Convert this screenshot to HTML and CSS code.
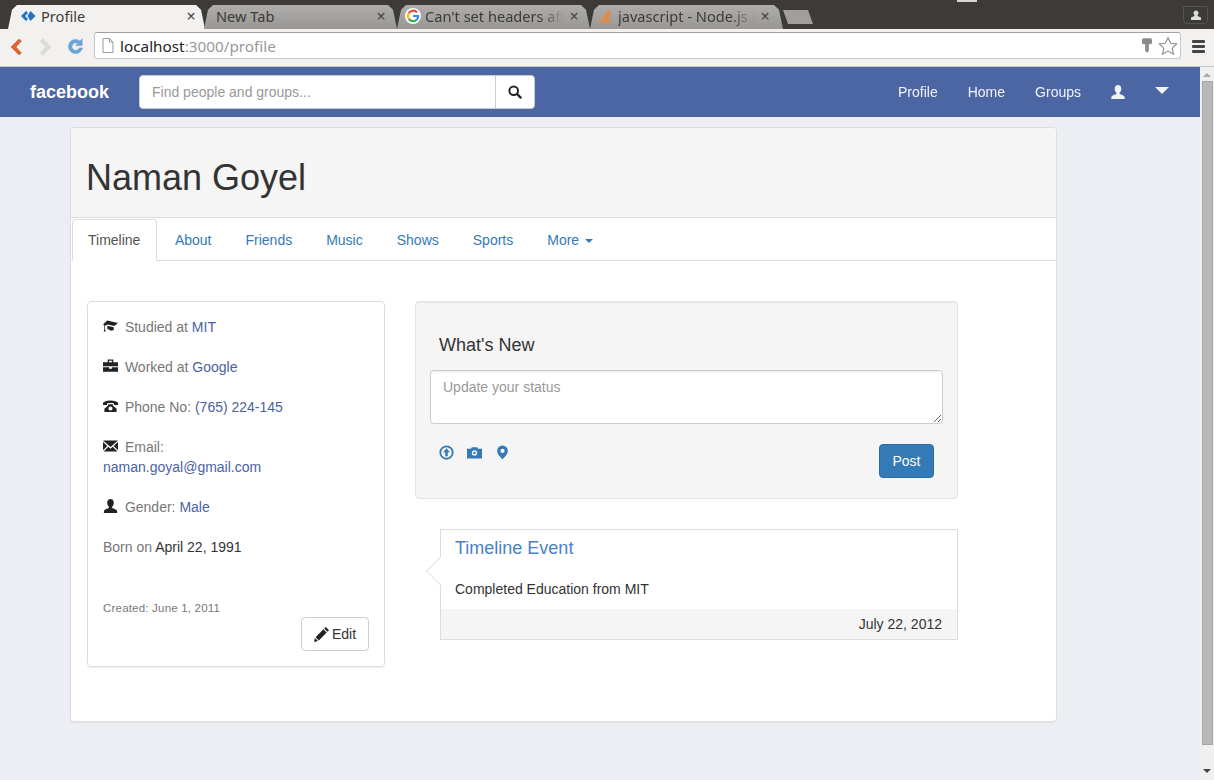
FILE: index.html
```html
<!DOCTYPE html>
<html lang="en">
<head>
  <meta charset="UTF-8">
  <title>Profile</title>
  <link rel="stylesheet" href="styles.css">
</head>
<body>
  <div class="windowGlint"></div>
  <div class="tabStrip">
    <div class="tab tabActive">
      <svg class="favicon" viewBox="0 0 16 16"><path fill="#1a73c8" d="M5 3 0 8l5 5 2-2-3-3 3-3zM9.500 3l-3 5 3 5 5-5z"/></svg>
      <span class="tabTitle">Profile</span>
      <span class="tabClose">×</span>
    </div>
    <div class="tab">
      <span class="tabTitle tabPlain">New Tab</span>
      <span class="tabClose">×</span>
    </div>
    <div class="tab">
      <svg class="favicon" viewBox="0 0 16 16">
        <circle cx="8" cy="8" r="8" fill="#fff"/>
        <path fill="none" stroke="#ea4335" stroke-width="2.200" d="M12 4.300A5.200 5.200 0 0 0 3.800 5.200"/>
        <path fill="none" stroke="#fbbc05" stroke-width="2.200" d="M3.800 5.200a5.200 5.200 0 0 0 0 5.600"/>
        <path fill="none" stroke="#34a853" stroke-width="2.200" d="M3.800 10.800a5.200 5.200 0 0 0 8 1"/>
        <path fill="none" stroke="#4285f4" stroke-width="2.200" d="M11.800 11.800A5.200 5.200 0 0 0 13.200 8H8"/>
      </svg>
      <span class="tabTitle">Can't set headers aft</span>
      <span class="tabClose">×</span>
    </div>
    <div class="tab tabLast">
      <svg class="favicon" viewBox="0 0 16 16"><path fill="none" stroke="#e8883a" stroke-width="1.500" d="M3 9.500v4.500h9V9.500M5 12.200h5M5.200 10l5 .5M5.800 7.800l4.800 1.400M6.800 5.500l4.300 2.500M8.500 3.500l3.500 3.500M10.800 2l2 4"/></svg>
      <span class="tabTitle">javascript - Node.js E</span>
      <span class="tabClose">×</span>
    </div>
    <div class="newTab"></div>
    <div class="profileBadge">
      <svg viewBox="0 0 12 12"><path fill="#ddd" d="M6 1.500a2.500 2.500 0 0 1 1.600 4.400V7L11 8.500V11H1V8.500L4.400 7V5.900A2.500 2.500 0 0 1 6 1.500z"/></svg>
    </div>
  </div>

  <div class="toolbar">
    <svg class="toolIcon" viewBox="0 0 16 20"><path fill="#e0672a" stroke="#b85a2e" stroke-width=".5" d="M11 2 3 10l8 8 2.500-2L8 10l5.500-6z"/></svg>
    <svg class="toolIcon" viewBox="0 0 16 20"><path fill="#dcdcda" stroke="#c8c8c6" stroke-width=".5" d="m5 2 8 8-8 8-2.500-2L8 10 2.500 4z"/></svg>
    <svg class="toolIcon reload" viewBox="0 0 18 18"><path fill="#6ea5d8" stroke="#5b93c9" stroke-width=".5" d="M9 1.500a7.500 7.500 0 0 1 4.600 1.600L16 1v7h-7l2.300-2.300A4 4 0 1 0 13 10.500h3.400A7.500 7.500 0 1 1 9 1.500z"/></svg>
    <div class="urlBox">
      <svg class="pageIcon" viewBox="0 0 12 15"><path fill="#fff" stroke="#9a9a9a" d="M1 .5h6.500L11 4v10.500H1z"/><path fill="none" stroke="#9a9a9a" d="M7.500.5V4H11"/></svg>
      <span class="urlHost">localhost</span><span class="urlRest">:3000/profile</span>
      <svg class="keyIcon" viewBox="0 0 11 16"><path fill="#8a8a8a" d="M2 0h7q2 0 2 2v3q0 1.500-2 1.500H7.500V14L5.500 16 3.500 14V6.500H2q-2 0-2-1.500V2q0-2 2-2z"/></svg>
      <svg class="starIcon" viewBox="0 0 20 20"><path fill="#fff" stroke="#8c8c8c" stroke-width="1.100" d="m10 1.500 2.600 5.700 6.200.7-4.600 4.200 1.300 6.100-5.500-3.100-5.500 3.100 1.300-6.100-4.600-4.200 6.200-.7z"/></svg>
    </div>
    <div class="menuBtn"><span></span><span></span><span></span></div>
  </div>

  <div class="viewport">
    <div class="page">
      <div class="topNav">
        <a class="brand" href="#">facebook</a>
        <form class="searchForm">
          <input class="searchInput" type="text" placeholder="Find people and groups...">
          <button class="searchBtn" type="button">
            <svg viewBox="0 0 14 14"><circle cx="5.700" cy="5.700" r="4.300" fill="none" stroke="#222" stroke-width="2"/><path stroke="#222" stroke-width="2.400" d="m9 9 4.200 4.200"/></svg>
          </button>
        </form>
        <ul class="navLinks">
          <li><a href="#">Profile</a></li>
          <li><a href="#">Home</a></li>
          <li><a href="#">Groups</a></li>
          <li><a href="#"><svg class="navUser" viewBox="0 0 14 14"><use href="#iconUser"/></svg></a></li>
          <li><a href="#"><span class="navCaret"></span></a></li>
        </ul>
      </div>

      <div class="main">
        <div class="card">
          <div class="cardHead">
            <h1>Naman Goyel</h1>
          </div>
          <ul class="profileTabs">
            <li class="current"><a href="#">Timeline</a></li>
            <li><a href="#">About</a></li>
            <li><a href="#">Friends</a></li>
            <li><a href="#">Music</a></li>
            <li><a href="#">Shows</a></li>
            <li><a href="#">Sports</a></li>
            <li><a href="#">More <span class="tabCaret"></span></a></li>
          </ul>

          <div class="cardBody">
            <div class="infoPanel">
              <p class="infoRow">
                <svg class="glyph" viewBox="0 0 16 14"><path fill="#222" d="M4.500 1 16 3.800 12 7 5 5.300 2.200 6.700v4.100l.8 2H.7l.7-2V6.300L0 5.500zM4.600 6.700l6.900 1.700v2.800L8.500 12l-3.900-2z"/></svg>
                Studied at <a href="#">MIT</a>
              </p>
              <p class="infoRow">
                <svg class="glyph" viewBox="0 0 16 14"><path fill="#222" d="M5 0h6v3h5v4.300H0V3h5zM6.300 1.300V3h3.400V1.300zM0 8.300h6.500v1.500h3V8.300H16V13H0z"/></svg>
                Worked at <a href="#">Google</a>
              </p>
              <p class="infoRow">
                <svg class="glyph" viewBox="0 0 16 14"><path fill="#222" d="M8 1c4 0 7 1 8 2.500V6h-4.300V4.200C10 3.700 6 3.700 4.300 4.200V6H0V3.500C1 2 4 1 8 1zM5.500 5h5v1.500L14.500 10v3.500h-13V10l4-3.500zM8 7.500a2.200 2.200 0 1 0 0 4.400 2.200 2.200 0 0 0 0-4.400z"/></svg>
                Phone No: <a href="#">(765) 224-145</a>
              </p>
              <p class="infoRow">
                <svg class="glyph" viewBox="0 0 16 14"><path fill="#222" d="M0 1h16L8 8zM0 2.700 4.700 7 0 11.500zM16 2.700 11.300 7l4.700 4.500zM5.600 7.800 8 10l2.400-2.200 5 5H.6z"/></svg>
                Email: <br><a href="#">naman.goyal@gmail.com</a>
              </p>
              <p class="infoRow">
                <svg class="glyph" viewBox="0 0 14 14"><use href="#iconUser"/></svg>
                Gender: <a href="#">Male</a>
              </p>
              <p class="infoRow">Born on <span class="infoDark">April 22, 1991</span></p>
              <p class="createdLine">Created: June 1, 2011</p>
              <div class="editLine">
                <button class="editBtn" type="button">
                  <svg viewBox="0 0 14 14"><path fill="#222" d="M11 0l3 3-1.500 1.500-3-3zM8.800 2.200l3 3L4.500 12.500l-3-3zM.9 10.300l2.800 2.800L0 14z"/></svg>
                  Edit
                </button>
              </div>
            </div>

            <div class="feedCol">
              <div class="statusBox">
                <h4>What's New</h4>
                <textarea class="statusInput" placeholder="Update your status"></textarea>
                <div class="statusFoot">
                  <div class="statusIcons">
                    <svg viewBox="0 0 14 14"><circle cx="7" cy="7" r="5.800" fill="none" stroke="#337ab7" stroke-width="1.700"/><path fill="#337ab7" d="M7 3 10.200 6.800H8.200V10.500H5.800V6.800H3.800z"/></svg>
                    <svg viewBox="0 0 14 14"><path fill="#337ab7" fill-rule="evenodd" d="M4.500 2h5l.8 1.500H14V12.500H0V3.500h3.700zM7 5a2.500 2.500 0 1 0 0 5 2.500 2.500 0 0 0 0-5zm0 1.400a1.100 1.100 0 1 1 0 2.200 1.100 1.100 0 0 1 0-2.200z"/></svg>
                    <svg viewBox="0 0 14 14"><path fill="#337ab7" fill-rule="evenodd" d="M7 .5a5 5 0 0 1 5 5c0 3-3 5.500-5 8-2-2.500-5-5-5-8a5 5 0 0 1 5-5zm0 3a2 2 0 1 0 0 4 2 2 0 0 0 0-4z"/></svg>
                  </div>
                  <button class="postBtn" type="button">Post</button>
                </div>
              </div>

              <div class="eventBox">
                <div class="eventArrow"></div>
                <h4 class="eventTitle">Timeline Event</h4>
                <p class="eventText">Completed Education from MIT</p>
                <div class="eventFoot">July 22, 2012</div>
              </div>
            </div>
          </div>
        </div>
      </div>
    </div>

    <div class="scrollBar">
      <div class="scrollUp"></div>
      <div class="scrollThumb"></div>
      <div class="scrollDown"></div>
    </div>
  </div>

  <svg class="defs" width="0" height="0">
    <symbol id="iconUser" viewBox="0 0 14 14">
      <path d="M7 0c2 0 3.300 1.500 3.300 3.800 0 1.600-.7 3.200-1.700 4v1.300c1.800.7 4.400 1.500 4.900 2.600.2.700.3 1.500.3 2.300H.2c0-.8.100-1.600.3-2.300.5-1.100 3.100-1.900 4.900-2.600V7.800c-1-.8-1.700-2.400-1.700-4C3.700 1.500 5 0 7 0z"/>
    </symbol>
  </svg>
</body>
</html>
```

FILE: styles.css
```css
*
{
    box-sizing: border-box;
}
html, body
{
    margin: 0;
    height: 780px;
    overflow: hidden;
}
body
{
    font-family: "Liberation Sans", Arial, sans-serif;
    font-size: 14px;
    line-height: 20px;
    color: #333;
    background-color: #edeef3;
}
a
{
    text-decoration: none;
}
.defs
{
    position: absolute;
}
.windowGlint
{
    position: absolute;
    left: 957px;
    top: 0;
    width: 20px;
    height: 2px;
    background-color: #d8d7d3;
}

/* browser chrome */
.tabStrip
{
    height: 29px;
    padding: 5px 0 0 8px;
    display: flex;
    background-color: #3c3b37;
    font-family: "Noto Sans", sans-serif;
    font-size: 14.600px;
}
.tab
{
    width: 193px;
    height: 24px;
    padding: 0 10px 2px 8px;
    display: flex;
    align-items: center;
    color: #3c3b37;
    background: linear-gradient(#aeadab, #989795);
    clip-path: polygon(0 100%, 4px 20%, 9px 0, calc(100% - 9px) 0, calc(100% - 4px) 20%, 100% 100%);
}
.tabActive
{
    width: 197px;
    height: 24px;
    margin-right: -1px;
    padding-left: 13px;
    padding-right: 8px;
    background: #f2f1f0;
    color: #3c3b37;
}
.tabLast
{
    padding-right: 12px;
    padding-left: 10px;
}
.favicon
{
    width: 16px;
    height: 16px;
    margin-right: 4px;
    flex: none;
}
.tabLast .favicon
{
    margin-left: -2px;
}
.tabTitle
{
    flex: 1;
    min-width: 0;
    white-space: nowrap;
    overflow: hidden;
}
.tab:nth-child(n+3) .tabTitle
{
    -webkit-mask-image: linear-gradient(to left, transparent 4px, #000 28px);
    mask-image: linear-gradient(to left, transparent 4px, #000 28px);
}
.tabPlain
{
    margin-left: 4px;
}
.tabClose
{
    width: 12px;
    flex: none;
    text-align: center;
    font-size: 16px;
    color: #444;
}
.newTab
{
    width: 30px;
    height: 14px;
    margin: 5px 0 0 0;
    background: #a09f9d;
    clip-path: polygon(0 0, 25px 0, 100% 100%, 5px 100%);
}
.profileBadge
{
    width: 25px;
    height: 18px;
    margin: 1px 6px 0 auto;
    padding: 2px 6px;
    border: 1px solid #55544f;
    border-radius: 0 0 4px 4px;
}
.profileBadge svg
{
    display: block;
    width: 12px;
    height: 12px;
}
.toolbar
{
    height: 38px;
    padding: 3px 0 7px 8px;
    display: flex;
    align-items: center;
    background-color: #f2f1f0;
    border-bottom: 1px solid #c8c7c5;
}
.toolIcon
{
    width: 16px;
    height: 20px;
    margin-top: 2px;
    margin-right: 14px;
    flex: none;
}
.reload
{
    width: 17px;
    height: 17px;
    margin-left: -1px;
    margin-right: 10px;
}
.urlBox
{
    width: 1087px;
    height: 27px;
    padding: 0 2px 0 7px;
    display: flex;
    align-items: center;
    background-color: #fff;
    border: 1px solid #c8c8c6;
    border-top-color: #a0a0a0;
    border-radius: 3px;
    font-family: "Noto Sans", sans-serif;
    font-size: 15.300px;
}
.pageIcon
{
    width: 12px;
    height: 15px;
    margin-right: 6px;
}
.urlHost
{
    color: #222;
}
.urlRest
{
    color: #999;
}
.keyIcon
{
    width: 10px;
    height: 15px;
    margin-left: auto;
    margin-right: 6px;
}
.starIcon
{
    width: 20px;
    height: 20px;
}
.menuBtn
{
    margin: 2px 0 0 11px;
    width: 13px;
    display: flex;
    flex-direction: column;
    gap: 2px;
}
.menuBtn span
{
    height: 3px;
    border-radius: 1px;
    background-color: #444;
}

/* page area */
.viewport
{
    height: 713px;
    display: flex;
}
.page
{
    width: 1200px;
    flex: none;
}
.topNav
{
    height: 50px;
    padding: 0 16px 0 30px;
    display: flex;
    align-items: center;
    background-color: #4c66a4;
}
.brand
{
    width: 109px;
    font-size: 18px;
    font-weight: bold;
    color: #fff;
}
.searchForm
{
    display: flex;
    width: 396px;
    height: 34px;
}
.searchInput
{
    flex: 1;
    min-width: 0;
    padding: 6px 12px;
    border: 1px solid #ccc;
    border-radius: 4px 0 0 4px;
    font-family: inherit;
    font-size: 14px;
    color: #555;
    outline: none;
}
.searchInput::placeholder
{
    color: #999;
}
.searchBtn
{
    width: 40px;
    margin-left: -1px;
    padding: 0;
    display: flex;
    align-items: center;
    justify-content: center;
    background-color: #fff;
    border: 1px solid #ccc;
    border-radius: 0 4px 4px 0;
}
.searchBtn svg
{
    width: 14px;
    height: 14px;
}
.navLinks
{
    margin: 0 0 0 auto;
    padding: 0;
    display: flex;
    list-style: none;
}
.navLinks a
{
    display: flex;
    align-items: center;
    height: 50px;
    padding: 0 15px;
    color: #fff;
    opacity: .92;
}
.navUser
{
    width: 14px;
    height: 14px;
    fill: #fff;
}
.navCaret
{
    width: 0;
    height: 0;
    margin-top: -3px;
    border-left: 7px solid transparent;
    border-right: 7px solid transparent;
    border-top: 7px solid #fff;
}
.main
{
    padding: 10px 143px 0 70px;
}
.card
{
    height: 595px;
    background-color: #fff;
    border: 1px solid #ddd;
    border-radius: 4px;
    box-shadow: 0 1px 1px rgba(0, 0, 0, .05);
}
.cardHead
{
    height: 90px;
    padding: 30px 15px 0;
    background-color: #f5f5f5;
    border-bottom: 1px solid #ddd;
    border-radius: 3px 3px 0 0;
}
.cardHead h1
{
    margin: 0;
    font-size: 36px;
    font-weight: 500;
    line-height: 40px;
    color: #333;
}
.profileTabs
{
    height: 43px;
    margin: 0;
    padding: 1px 0 0 1px;
    display: flex;
    list-style: none;
    border-bottom: 1px solid #ddd;
}
.profileTabs li
{
    margin-right: 2px;
    margin-bottom: -1px;
}
.profileTabs a
{
    display: block;
    height: 42px;
    padding: 10px 15px 0;
    border: 1px solid transparent;
    border-radius: 4px 4px 0 0;
    color: #337ab7;
}
.profileTabs .current a
{
    padding-right: 15.500px;
    color: #555;
    background-color: #fff;
    border-color: #ddd #ddd #fff;
}
.tabCaret
{
    display: inline-block;
    width: 0;
    height: 0;
    margin-left: 2px;
    vertical-align: middle;
    border-left: 4px solid transparent;
    border-right: 4px solid transparent;
    border-top: 4px solid #337ab7;
}
.cardBody
{
    padding: 40px 98px 0 16px;
    display: flex;
    gap: 30px;
    align-items: flex-start;
}

/* left info panel */
.infoPanel
{
    width: 298px;
    height: 366px;
    padding: 15px 15px 0;
    flex: none;
    border: 1px solid #ddd;
    border-radius: 4px;
    box-shadow: 0 1px 1px rgba(0, 0, 0, .05);
    color: #777;
}
.infoRow
{
    margin: 0 0 20px;
}
.infoRow a
{
    color: #4a62a4;
}
.infoDark
{
    color: #333;
}
.glyph
{
    width: 15px;
    height: 14px;
    margin-right: 3px;
    vertical-align: -1px;
}
.glyph use
{
    fill: #222;
}
.createdLine
{
    margin: 42px 0 0;
    font-size: 11.500px;
    line-height: 18px;
    letter-spacing: .2px;
}
.editLine
{
    display: flex;
    justify-content: flex-end;
}
.editBtn
{
    width: 68px;
    height: 34px;
    padding: 0;
    display: flex;
    align-items: center;
    justify-content: center;
    gap: 3px;
    background-color: #fff;
    border: 1px solid #ccc;
    border-radius: 4px;
    font-family: inherit;
    font-size: 14px;
    color: #333;
}
.editBtn svg
{
    width: 15px;
    height: 15px;
}

/* right column */
.feedCol
{
    width: 543px;
    flex: none;
}
.statusBox
{
    height: 198px;
    padding: 33px 14px 0;
    background-color: #f5f5f5;
    border: 1px solid #e3e3e3;
    border-radius: 4px;
    box-shadow: inset 0 1px 1px rgba(0, 0, 0, .05);
}
.statusBox h4
{
    margin: 0 0 15px 9px;
    font-size: 18px;
    font-weight: 500;
    line-height: 20px;
    color: #333;
}
.statusInput
{
    display: block;
    width: 100%;
    height: 54px;
    padding: 6px 12px;
    border: 1px solid #ccc;
    border-radius: 4px;
    font-family: inherit;
    font-size: 14px;
    line-height: 20px;
    outline: none;
    box-shadow: inset 0 1px 1px rgba(0, 0, 0, .075);
}
.statusInput::placeholder
{
    color: #999;
}
.statusFoot
{
    margin-top: 20px;
    padding: 0 9px;
    display: flex;
    justify-content: space-between;
    align-items: flex-start;
}
.statusIcons
{
    display: flex;
    gap: 13px;
}
.statusIcons svg
{
    width: 15px;
    height: 15px;
    margin-top: 1px;
}
.postBtn
{
    width: 55px;
    height: 34px;
    padding: 0;
    background-color: #337ab7;
    border: 1px solid #2e6da4;
    border-radius: 4px;
    font-family: inherit;
    font-size: 14px;
    color: #fff;
}
.eventBox
{
    position: relative;
    height: 111px;
    margin: 30px 0 0 25px;
    padding-top: 8px;
    background-color: #fff;
    border: 1px solid #ddd;
}
.eventArrow
{
    position: absolute;
    left: -11px;
    top: 31px;
    width: 20px;
    height: 20px;
    background-color: #fff;
    border-left: 1px solid #e3e3e3;
    border-bottom: 1px solid #e3e3e3;
    transform: rotate(45deg);
}
.eventTitle
{
    position: relative;
    margin: 0 14px;
    font-size: 18px;
    font-weight: 500;
    line-height: 20px;
    color: #4a7fc9;
}
.eventText
{
    position: relative;
    margin: 21px 14px 0;
    color: #333;
}
.eventFoot
{
    position: relative;
    height: 30px;
    margin-top: 10px;
    padding: 5px 15px 0;
    text-align: right;
    background-color: #f5f5f5;
}

/* scrollbar */
.scrollBar
{
    width: 14px;
    height: 713px;
    padding: 0 1px;
    display: flex;
    flex-direction: column;
    align-items: center;
    background-color: #f0f0f0;
}
.scrollUp
{
    width: 0;
    height: 0;
    margin-top: 6px;
    border-left: 4px solid transparent;
    border-right: 4px solid transparent;
    border-bottom: 4px solid #aaa;
}
.scrollThumb
{
    width: 11px;
    height: 664px;
    margin-top: 4px;
    background-color: #b9b9b9;
    border: 1px solid #a6a6a6;
}
.scrollDown
{
    width: 0;
    height: 0;
    margin-top: 24px;
    border-left: 4px solid transparent;
    border-right: 4px solid transparent;
    border-top: 4px solid #444;
}
```
